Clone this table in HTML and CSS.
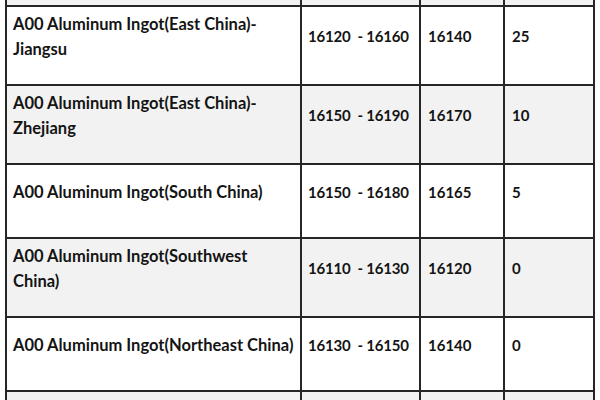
FILE: index.html
```html
<!DOCTYPE html>
<html>
<head>
<meta charset="utf-8">
<link rel="stylesheet" href="styles.css">
</head>
<body>
<table class="prices">
  <colgroup>
    <col class="c-name">
    <col class="c-range">
    <col class="c-avg">
    <col class="c-chg">
  </colgroup>
  <tr class="row-stub gray"><td></td><td></td><td></td><td></td></tr>
  <tr class="row-tall">
    <td>A00 Aluminum Ingot(East China)-<br>Jiangsu</td>
    <td class="num range">16120  - 16160</td>
    <td class="num">16140</td>
    <td class="num">25</td>
  </tr>
  <tr class="row-tall gray">
    <td>A00 Aluminum Ingot(East China)-<br>Zhejiang</td>
    <td class="num range">16150  - 16190</td>
    <td class="num">16170</td>
    <td class="num">10</td>
  </tr>
  <tr class="row-short">
    <td>A00 Aluminum Ingot(South China)</td>
    <td class="num range">16150  - 16180</td>
    <td class="num">16165</td>
    <td class="num">5</td>
  </tr>
  <tr class="row-tall gray">
    <td>A00 Aluminum Ingot(Southwest<br>China)</td>
    <td class="num range">16110  - 16130</td>
    <td class="num">16120</td>
    <td class="num">0</td>
  </tr>
  <tr class="row-short">
    <td>A00 Aluminum Ingot(Northeast China)</td>
    <td class="num range">16130  - 16150</td>
    <td class="num">16140</td>
    <td class="num">0</td>
  </tr>
  <tr class="row-tall gray">
    <td></td><td></td><td></td><td></td>
  </tr>
</table>
</body>
</html>
```
FILE: styles.css
```css
html, body {
  margin: 0;
  padding: 0;
  background: #ffffff;
  overflow: hidden;
}
body {
  padding-left: 5px;
  font-family: Lato, "Open Sans", "Liberation Sans", sans-serif;
  font-weight: 700;
  font-size: 16.5px;
  color: #141414;
}
.prices {
  border-collapse: collapse;
  table-layout: fixed;
  width: 590px;
}
.c-name { width: 295px; }
.c-range { width: 119px; }
.c-avg { width: 84px; }
.c-chg { width: 90px; }
.prices td {
  border: 2px solid #262626;
  padding: 0 2px 18px 6px;
  line-height: 25px;
  vertical-align: middle;
  white-space: nowrap;
  overflow: hidden;
}
.prices td.num {
  font-size: 15px;
  padding-left: 7px;
}
.prices td.range {
  white-space: pre;
  padding-left: 6px;
  letter-spacing: -0.2px;
}
.gray td { background: #f2f2f2; }
.row-stub td {
  border-top: none;
  height: 5px;
  padding: 0;
  line-height: 0;
}
.row-tall { height: 79px; }
.row-short { height: 74px; }
```
